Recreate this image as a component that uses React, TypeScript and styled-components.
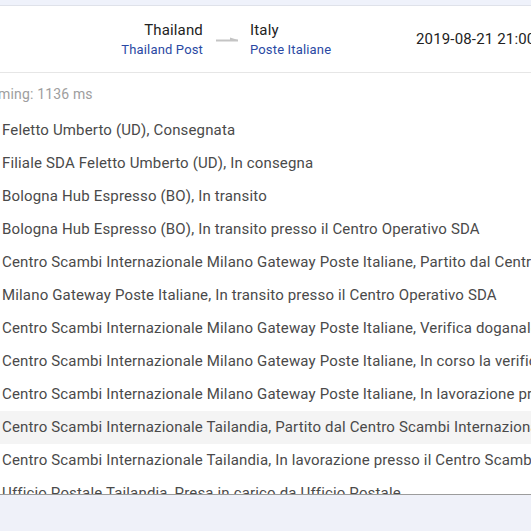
import React from "react";
import styled, { createGlobalStyle } from "styled-components";

const GlobalStyle = createGlobalStyle`
  html, body {
    margin: 0;
    padding: 0;
    background: #ffffff;
    overflow: hidden;
  }
  body {
    font-family: Roboto, "Liberation Sans", Arial, sans-serif;
    letter-spacing: 0.16px;
  }
`;

const Page = styled.div`
  width: 531px;
  height: 531px;
  display: flex;
  flex-direction: column;
  overflow: hidden;
`;

const TopStrip = styled.div`
  height: 5px;
  flex: none;
  background: #eff2fb;
  border-bottom: 1px solid #dfe2ea;
`;

const Header = styled.div`
  height: 66px;
  flex: none;
  display: flex;
  align-items: center;
  border-bottom: 1px solid #e6e6e6;
  white-space: nowrap;
`;

const Place = styled.div<{ $align: "left" | "right"; $width: number }>`
  width: ${(p) => p.$width}px;
  flex: none;
  display: flex;
  flex-direction: column;
  align-items: ${(p) => (p.$align === "right" ? "flex-end" : "flex-start")};
  gap: 1px;
  margin-top: 1px;
`;

const Country = styled.span`
  font-size: 15px;
  color: #222222;
  line-height: 19px;
`;

const Carrier = styled.span`
  font-size: 13px;
  color: #2a49a3;
  line-height: 17px;
`;

const ArrowWrap = styled.div`
  width: 47px;
  flex: none;
  display: flex;
  justify-content: center;
  margin-top: 0;
`;

const DateText = styled.div`
  font-size: 15px;
  color: #222222;
  flex: none;
`;

const Body = styled.div`
  flex: 1;
  overflow: hidden;
  min-height: 0;
`;

const Timing = styled.div`
  font-size: 14px;
  color: #9e9e9e;
  height: 20px;
  line-height: 20px;
  margin: 11px 0 10px -14px;
  white-space: nowrap;
`;

const List = styled.ul`
  list-style: none;
  margin: 0;
  padding: 0;
`;

const Row = styled.li<{ $active?: boolean }>`
  height: 33px;
  line-height: 33px;
  padding-left: 2px;
  font-size: 15px;
  color: #4a4a4a;
  white-space: nowrap;
  overflow: hidden;
  background: ${(p) => (p.$active ? "#f4f4f4" : "transparent")};
`;

const Footer = styled.div`
  height: 36px;
  flex: none;
  background: #eff1f9;
  border-top: 1px solid #9c9c9c;
`;

const events = [
  "Feletto Umberto (UD), Consegnata",
  "Filiale SDA Feletto Umberto (UD), In consegna",
  "Bologna Hub Espresso (BO), In transito",
  "Bologna Hub Espresso (BO), In transito presso il Centro Operativo SDA",
  "Centro Scambi Internazionale Milano Gateway Poste Italiane, Partito dal Centro Scambi Internazionale",
  "Milano Gateway Poste Italiane, In transito presso il Centro Operativo SDA",
  "Centro Scambi Internazionale Milano Gateway Poste Italiane, Verifica doganale",
  "Centro Scambi Internazionale Milano Gateway Poste Italiane, In corso la verifica doganale",
  "Centro Scambi Internazionale Milano Gateway Poste Italiane, In lavorazione presso il Centro Scambi",
  "Centro Scambi Internazionale Tailandia, Partito dal Centro Scambi Internazionale",
  "Centro Scambi Internazionale Tailandia, In lavorazione presso il Centro Scambi Internazionale",
  "Ufficio Postale Tailandia, Presa in carico da Ufficio Postale",
];

function RouteArrow() {
  return (
    <svg width="24" height="8" viewBox="0 0 24 8">
      <path d="M1 5.5 H23" stroke="#c4c4c4" strokeWidth="2" />
      <path d="M15 2.5 L23 5 L15 5 Z" fill="#c4c4c4" />
    </svg>
  );
}

export default function App() {
  return (
    <Page>
      <GlobalStyle />
      <TopStrip />
      <Header>
        <Place $align="right" $width={203}>
          <Country>Thailand</Country>
          <Carrier>Thailand Post</Carrier>
        </Place>
        <ArrowWrap>
          <RouteArrow />
        </ArrowWrap>
        <Place $align="left" $width={166}>
          <Country>Italy</Country>
          <Carrier>Poste Italiane</Carrier>
        </Place>
        <DateText>2019-08-21 21:00</DateText>
      </Header>
      <Body>
        <Timing>Timing: 1136 ms</Timing>
        <List>
          {events.map((e, i) => (
            <Row key={i} $active={i === 9}>
              {e}
            </Row>
          ))}
        </List>
      </Body>
      <Footer />
    </Page>
  );
}
